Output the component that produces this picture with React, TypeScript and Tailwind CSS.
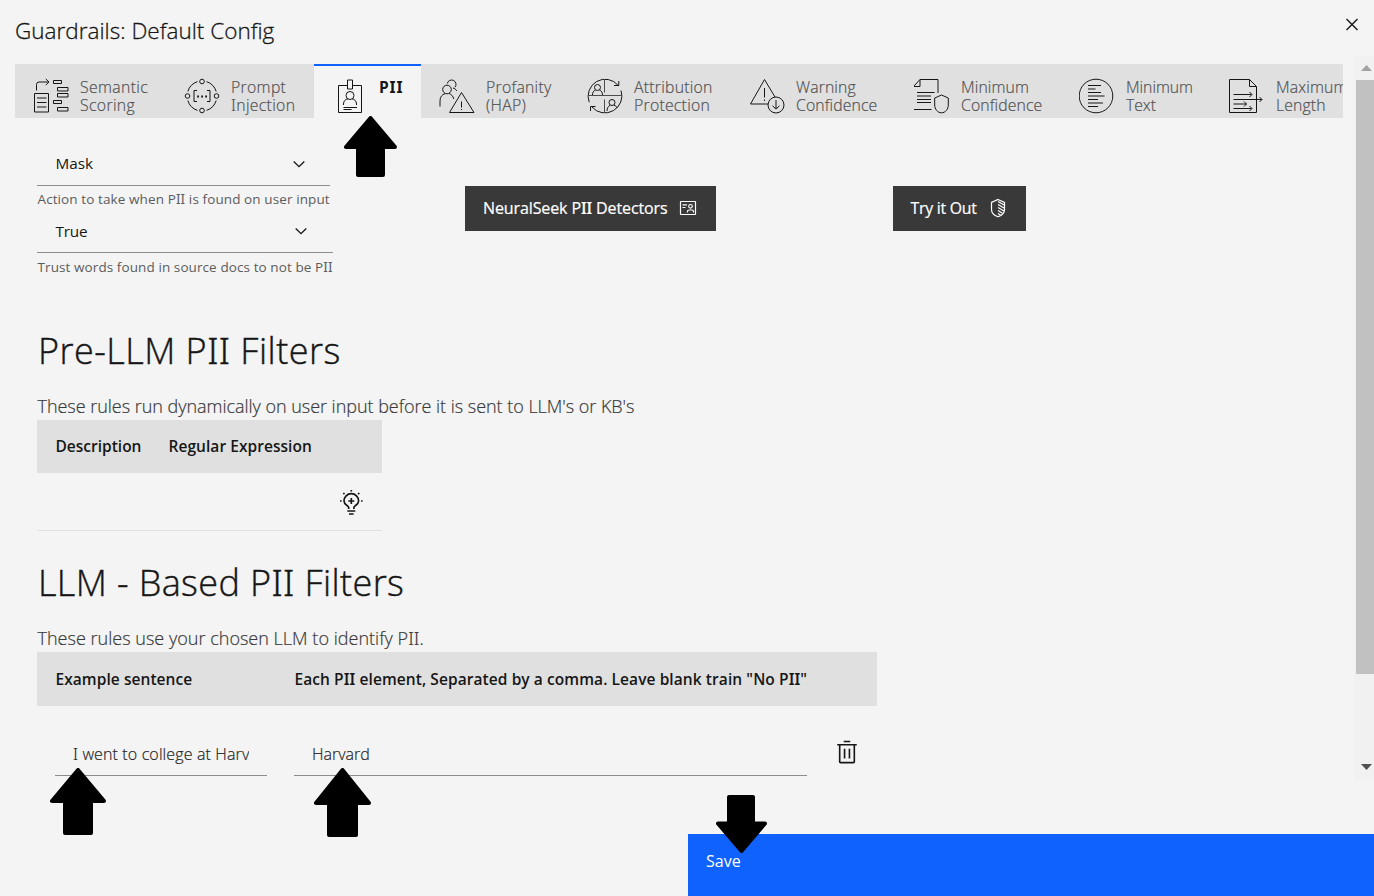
import type { ReactNode } from "react";

function Pictogram({ children }: { children: ReactNode }) {
  return (
    <svg
      className="mt-[14px] h-9 w-9 shrink-0"
      viewBox="0 0 36 36"
      fill="none"
      stroke="#161616"
      strokeWidth="1"
    >
      {children}
    </svg>
  );
}

function Label({ children }: { children: string }) {
  return (
    <span>
      {children.split(/(I+)/).map((part, i) =>
        part.startsWith("I") ? (
          <span key={i} className="font-['Noto_Sans',sans-serif] leading-none">{part}</span>
        ) : (
          part
        ),
      )}
    </span>
  );
}

const SemanticIcon = () => (
  <Pictogram>
    <path d="M1.500 15.500h14v18.500h-14zM4 20h9.500M4 24.500h9.500M4 29h9.500M3.500 12.500V6.500Q3.500 4 6 4h10M12.800 1l3.200 3-3.200 3" />
    <path d="M20.500 2.500h8v3h-8zM24.500 9.500h10.500v3.500h-10.500zM24.500 15.500h10.500v3.500h-10.500zM20.500 22.500h8v3h-8zM24.500 29.500h10.500v3.500h-10.500z" />
  </Pictogram>
);

const PromptIcon = () => (
  <Pictogram>
    <circle cx="18" cy="3.500" r="2.300" />
    <circle cx="3.500" cy="18" r="2.300" />
    <circle cx="32.500" cy="18" r="2.300" />
    <circle cx="18" cy="32.500" r="2.300" />
    <path d="M3.800 13.500A15 15 0 0 1 13.500 3.600M22.500 3.600A15 15 0 0 1 32.200 13.500M32.200 22.500A15 15 0 0 1 22.500 32.400M13.500 32.400A15 15 0 0 1 3.800 22.500" />
    <path d="M13 12.500h-3v11h3M23 12.500h3v11h-3" />
    <path d="M13.200 18.500h1.800M17.200 18.500h1.800M21.200 18.500h1.800" strokeWidth="1.800" />
  </Pictogram>
);

const BadgeIcon = () => (
  <Pictogram>
    <path d="M15 7.500H6.500v27h23v-27H21M15.500 2h5v9h-5z" />
    <circle cx="18" cy="17.500" r="4" />
    <path d="M11.500 27v-1c0-3 2-4.800 4.500-5.200M24.500 27v-1c0-3-2-4.800-4.500-5.200M11.500 29.500h13.500M11.500 31.500h8" />
  </Pictogram>
);

const ProfanityIcon = () => (
  <Pictogram>
    <g transform="translate(-.5 0)">
      <circle cx="8.500" cy="11.500" r="4.300" />
      <path d="M1.500 28.500v-5.500c0-4 2-6.500 5-7.300M10.500 15.500c2.500.8 4.200 2.800 4.800 5.500" />
      <path d="M8.800 5.500a4.400 4.400 0 1 1 7.700 3.700M14.500 10c1.500.3 3 1.500 4 3" />
      <path d="M23 14.500L11 34.500h24.500zM23 23.500v6M23 31v1" />
    </g>
  </Pictogram>
);

const AttributionIcon = () => (
  <Pictogram>
    <path d="M2.200 24.200A17 17 0 0 1 31.300 7.500" />
    <path d="M34 12.500A17 17 0 0 1 5 29" />
    <path d="M27 7.500h4.800V3M3.500 33v-4.500h5" />
    <path d="M1 17.500h34M17.500 1v13.500M17.500 21.500V35" stroke="#4c4c4c" />
    <circle cx="10.500" cy="9.500" r="3" />
    <path d="M5.500 17c0-2.800 1-4 3-5M15.500 17c0-2.800-1-4-3-5" />
    <circle cx="25" cy="24.500" r="3" />
    <path d="M20 33c0-2.800 1-4.300 3-5.800M30 30c0-1.200-1-2-3-2.800" />
  </Pictogram>
);

const WarningIcon = () => (
  <Pictogram>
    <path d="M19 26H1.500L15.500 1.500 26 19M15.500 10v9.500M15.500 21.500V23" />
    <circle cx="27" cy="27" r="8" />
    <path d="M27 22v9M23.500 27.800l3.500 3.200 3.500-3.200" />
  </Pictogram>
);

const DocShieldIcon = () => (
  <Pictogram>
    <path d="M18 31.500H0V8.500l6.500-7H24.500V15M0 8.500h6.500v-7M3.500 14.500h17.500M3.500 18h14M3.500 21.500h14M3.500 24.500h14" transform="translate(-.5 0)" />
    <path d="M27.500 17l6.800 3v7c0 4-2.800 7.800-6.800 7.800s-6.800-3.800-6.800-7.800v-7z" />
  </Pictogram>
);

const TextCircleIcon = () => (
  <Pictogram>
    <circle cx="17" cy="18" r="16.800" />
    <path d="M9 7.500h13M9 11h7.500M9 14.500h13M9 18h16.500M9 21.500h10M9 25h15M9 28.500h10" />
  </Pictogram>
);

const LengthIcon = () => (
  <Pictogram>
    <g transform="translate(-1 0)">
      <path d="M28.500 15V8.500l-7-7h-20v33h27V23M28.500 15v8M21.500 1.500v7h7M5.500 16.500h18M5.500 21.500H34M5.500 26h13M5.500 30.500h18" />
      <path d="M21.500 14l2.500 2.500-2.500 2.500M31.500 19l2.500 2.500-2.500 2.500M16 23.500l2.500 2.500-2.500 2.500M21.500 28l2.500 2.500-2.500 2.500" />
    </g>
  </Pictogram>
);

interface TabProps {
  icon: ReactNode;
  first: string;
  second: string;
  width: string;
  tracking?: string;
}

function Tab({ icon, first, second, width, tracking = "tracking-[0.110px]" }: TabProps) {
  return (
    <button className={`flex h-full shrink-0 items-start pl-[18px] text-left ${width}`}>
      {icon}
      <span
        className={`ml-[11px] mt-[14px] flex flex-col text-[15.800px] font-light leading-[18px] text-[#525252] [-webkit-text-stroke:0.200px] ${tracking}`}
      >
        <Label>{first}</Label>
        <Label>{second}</Label>
      </span>
    </button>
  );
}

function Chevron() {
  return (
    <svg className="h-4 w-4" viewBox="0 0 16 16" fill="none" stroke="#161616" strokeWidth="1.300">
      <path d="M2.700 5.500L8 10.700l5.300-5.200" />
    </svg>
  );
}

function Arrow({ className, width, height, d }: { className: string; width: number; height: number; d: string }) {
  return (
    <svg className={`absolute z-10 ${className}`} width={width} height={height} viewBox={`0 0 ${width} ${height}`}>
      <path d={d} fill="#000" stroke="#000" strokeWidth="4" strokeLinejoin="round" />
    </svg>
  );
}

export default function App() {
  return (
    <div className="relative flex h-[896px] w-[1374px] flex-col overflow-hidden bg-[#f4f4f4] font-['Open_Sans','Noto_Sans',sans-serif] text-[#161616]">
      <header className="flex h-14 shrink-0 items-start justify-between pl-[15px] pr-[14px]">
        <h1 className="mt-[15px] text-[22.500px] font-light leading-8 tracking-[0.020px] [-webkit-text-stroke:0.300px]">
          Guardrails: Default Config
        </h1>
        <svg className="mt-4 h-4 w-4" viewBox="0 0 16 16" fill="none" stroke="#161616" strokeWidth="1.400">
          <path d="M2.500 3l11 11M13.500 3l-11 11" />
        </svg>
      </header>

      <div className="flex h-[724px] shrink-0">
        <main className="flex w-[1354px] flex-col pl-[15px] pt-2">
          <nav className="flex h-[54px] w-[1328px] shrink-0 overflow-hidden bg-[#e0e0e0]">
            <Tab icon={<SemanticIcon />} first="Semantic" second="Scoring" width="w-[151px]" tracking="tracking-[0.340px]" />
            <Tab icon={<PromptIcon />} first="Prompt" second="Injection" width="w-[148px]" tracking="tracking-[0.320px]" />
            <button className="flex h-full w-[107px] shrink-0 items-start border-t-2 border-[#0f62fe] bg-[#f4f4f4] pl-[18px]">
              <span className="-mt-[2px]"><BadgeIcon /></span>
              <span className="ml-[11px] mt-[12px] text-[15.500px] font-bold leading-[18px] tracking-[0.850px]">
                <Label>PII</Label>
              </span>
            </button>
            <Tab icon={<ProfanityIcon />} first="Profanity" second="(HAP)" width="w-[148px]" tracking="tracking-[0.250px]" />
            <Tab icon={<AttributionIcon />} first="Attribution" second="Protection" width="w-[162px]" tracking="tracking-[0.250px]" />
            <Tab icon={<WarningIcon />} first="Warning" second="Confidence" width="w-[165px]" />
            <Tab icon={<DocShieldIcon />} first="Minimum" second="Confidence" width="w-[165px]" />
            <Tab icon={<TextCircleIcon />} first="Minimum" second="Text" width="w-[150px]" tracking="tracking-[-0.050px]" />
            <Tab icon={<LengthIcon />} first="Maximum" second="Length" width="w-[160px]" />
          </nav>

          <div className="flex flex-col pl-[22px]">
            <section className="flex h-[202px] items-start pt-6">
              <div className="flex w-[428px] flex-col items-start">
                <div className="flex h-11 w-[293px] items-center justify-between border-b border-[#8d8d8d] pl-[18.500px] pr-[23px] text-[15.300px]">
                  <span>Mask</span>
                  <Chevron />
                </div>
                <p className="mt-1 whitespace-nowrap pl-[0.500px] text-[13.500px] leading-[18px] tracking-[0.100px] text-[#5c5c5c]">
                  <Label>Action to take when PII is found on user input</Label>
                </p>
                <div className="mt-px flex h-11 w-[296px] items-center justify-between border-b border-[#8d8d8d] pl-[18.500px] pr-6 text-[15.300px]">
                  <span className="mt-[2px] tracking-[-0.200px]">True</span>
                  <Chevron />
                </div>
                <p className="mt-[5px] whitespace-nowrap pl-[0.500px] text-[13.500px] leading-[18px] tracking-[0.090px] text-[#5c5c5c]">
                  <Label>Trust words found in source docs to not be PII</Label>
                </p>
              </div>
              <div className="flex w-[428px] pt-11">
                <button className="flex h-[45px] w-[251px] items-center justify-between bg-[#393939] pl-[18px] pr-[19px] text-[16px] font-medium tracking-[-0.110px] text-white">
                  <span className="-mt-[2px] [-webkit-text-stroke:0.200px]"><Label>NeuralSeek PII Detectors</Label></span>
                  <svg className="-mt-[1px] h-[18px] w-[18px]" viewBox="0 0 18 18" fill="none" stroke="#fff" strokeWidth="1.200">
                    <rect x="1.500" y="2.500" width="15" height="13" rx=".5" />
                    <path d="M3.500 5.800H8M3.500 8.500h3" />
                    <circle cx="11.500" cy="7.300" r="1.800" />
                    <path d="M8.500 13.500v-1c0-1 .8-1.500 1.500-1.500h3c.8 0 1.500.5 1.500 1.500v1" />
                  </svg>
                </button>
              </div>
              <div className="flex pt-11">
                <button className="flex h-[45px] w-[133px] items-center justify-between bg-[#393939] pl-[17.500px] pr-[18px] text-[15.800px] font-medium tracking-[-0.240px] text-white">
                  <span className="[-webkit-text-stroke:0.200px]">Try it Out</span>
                  <svg className="-mt-[1px] h-5 w-5" viewBox="0 0 20 20" fill="none" stroke="#fff" strokeWidth="1.200">
                    <path d="M10 1.500l6.500 3v7c0 3.500-2.500 6-6.500 7.300-4-1.300-6.500-3.800-6.500-7.300v-7z" />
                    <path d="M10 3.500l6 3.500M10 6.500l6 3.500M10 9.500l6 3.500M10 12.500l4.500 2.700M10 15.500l2.500 1.500" />
                  </svg>
                </button>
              </div>
            </section>

            <section className="flex h-[211px] flex-col pt-[9px]">
              <h2 className="whitespace-nowrap pl-px text-[36px] font-light leading-[44px] tracking-[0.480px] [-webkit-text-stroke:0.400px]">
                <Label>Pre-LLM PII Filters</Label>
              </h2>
              <p className="mt-[21px] whitespace-nowrap pl-[0.500px] text-[18px] font-light leading-6 tracking-[-0.030px] text-[#393939] [-webkit-text-stroke:0.200px]">
                These rules run dynamically on user input before it is sent to LLM's or KB's
              </p>
              <div className="mt-[2px] flex h-[53px] w-[345px] shrink-0 items-center bg-[#e0e0e0] pl-[18.500px] text-[15.500px] font-semibold">
                <span className="w-[113px]">Description</span>
                <span className="tracking-[0.050px]">Regular Expression</span>
              </div>
              <div className="flex h-[58px] w-[345px] shrink-0 items-start justify-end border-b border-[#e0e0e0] pr-[17px] pt-4">
                <svg className="h-7 w-7" viewBox="0 0 28 28" fill="none" stroke="#161616" strokeWidth="1.700">
                  <path d="M11.700 20v-1.500c0-1.800-4.700-2.600-4.700-6.500a7.300 7.300 0 0 1 14.600 0c0 3.900-4.700 4.700-4.700 6.500V20" />
                  <path d="M14.300 9v6M11.300 12h6M10.300 22h8M12 25h4.600M14.300 1v1.600M3 12h1.600M24 12h1.600M6.300 4l1.200 1.200M22.300 4l-1.200 1.200" />
                </svg>
              </div>
            </section>

            <section className="flex flex-col pt-[30px]">
              <h2 className="whitespace-nowrap pl-px text-[36px] font-light leading-[44px] tracking-[0.400px] [-webkit-text-stroke:0.400px]">
                <Label>LLM - Based PII Filters</Label>
              </h2>
              <p className="mt-[21px] whitespace-nowrap pl-[0.500px] text-[18px] font-light leading-6 tracking-[0.020px] text-[#393939] [-webkit-text-stroke:0.200px]">
                <Label>These rules use your chosen LLM to identify PII.</Label>
              </p>
              <div className="mt-[2px] flex h-[54px] w-[840px] shrink-0 items-center bg-[#e0e0e0] pl-[18.500px] pt-[2px] text-[15.500px] font-semibold">
                <span className="w-[239px] tracking-[0.060px]">Example sentence</span>
                <span className="whitespace-nowrap tracking-[0.080px]">
                  <Label>Each PII element, Separated by a comma. Leave blank train "No PII"</Label>
                </span>
              </div>
              <div className="mt-[26px] flex h-11 w-[840px] items-start pl-[18px] text-[16px] font-light text-[#262626] [-webkit-text-stroke:0.200px]">
                <div className="flex h-11 w-[212px] items-center border-b border-[#8d8d8d] px-[18px]">
                  <span className="overflow-hidden whitespace-nowrap tracking-[0.130px]"><Label>I went to college at Harv</Label></span>
                </div>
                <div className="ml-[27px] flex h-11 w-[513px] items-center border-b border-[#8d8d8d] px-[18px]">Harvard</div>
                <svg className="ml-[26.500px] mt-[7px] h-[26px] w-[26px]" viewBox="0 0 32 32" fill="#161616">
                  <path d="M12 12h2v12h-2zM18 12h2v12h-2zM4 6v2h2v20a2 2 0 0 0 2 2h16a2 2 0 0 0 2-2V8h2V6zM8 28V8h16v20zM12 2h8v2h-8z" />
                </svg>
              </div>
            </section>
          </div>
        </main>

        <aside className="flex w-5 flex-col items-center bg-[#f1f1f1] pl-[2px]">
          <svg className="h-6 w-[18px]" viewBox="0 0 18 24">
            <path d="M5 15l5.500-6 5.500 6z" fill="#a3a3a3" />
          </svg>
          <div className="h-[594px] w-[18px] bg-[#c1c1c1]" />
          <svg className="mt-auto h-6 w-[18px]" viewBox="0 0 18 24">
            <path d="M5 8h11l-5.500 6z" fill="#505050" />
          </svg>
        </aside>
      </div>

      <footer className="mt-auto flex h-[62px] justify-end">
        <button className="flex w-[686px] items-start bg-[#0f62fe] pl-[18px] pt-[15px] text-[16px] leading-6 text-white">Save</button>
      </footer>

      <Arrow className="left-[344px] top-[116px]" width={53} height={61} d="M26.500 2L2 31H14V59H39V31H51z" />
      <Arrow className="left-[50px] top-[768px]" width={56} height={67} d="M28 2L2 33H15V65H41V33H54z" />
      <Arrow className="left-[314px] top-[768px]" width={57} height={69} d="M28.500 2L2 35H15V67H42V35H55z" />
      <Arrow className="left-[716px] top-[795px]" width={51} height={58} d="M25.500 56L2 28.500H13V2H37V28.500H49z" />
    </div>
  );
}
